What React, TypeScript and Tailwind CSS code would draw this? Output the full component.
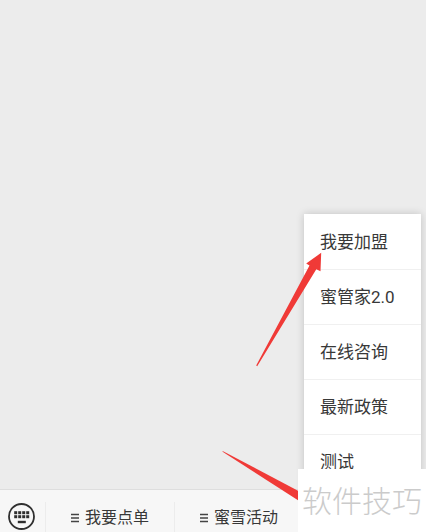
const menuItems = ['我要加盟', '蜜管家2.0', '在线咨询', '最新政策', '测试'];
const tabs = ['我要点单', '蜜雪活动'];

function KeyboardIcon() {
  return (
    <svg viewBox="0 0 27 27" className="size-[27px]" fill="none" aria-hidden="true">
      <circle cx="13.5" cy="13.5" r="12.5" stroke="#2f2f2f" strokeWidth="1.8" />
      <g fill="#2f2f2f">
        {[6.2, 10.2, 14.2, 18.2].map((x) => (
          <g key={x}>
            <rect x={x} y="8.2" width="3" height="3" />
            <rect x={x} y="12.2" width="3" height="3" />
          </g>
        ))}
        <rect x="9.8" y="17.8" width="8" height="2.4" />
      </g>
    </svg>
  );
}

function LinesIcon() {
  return (
    <svg viewBox="0 0 8 10" className="h-[10px] w-2" aria-hidden="true">
      <path d="M0 1.5H8M0 5H8M0 8.5H8" stroke="#444" strokeWidth="1.4" />
    </svg>
  );
}

function PopupMenu() {
  return (
    <ul className="w-[117px] bg-white pt-px shadow-[0_0_8px_rgba(0,0,0,0.18)]">
      {menuItems.map((item) => (
        <li key={item} className="border-b border-[#f0f0f0] last:border-b-0">
          <button type="button" className="flex h-[54px] w-full items-center px-4 text-left">
            {item}
          </button>
        </li>
      ))}
    </ul>
  );
}

function BottomBar() {
  return (
    <nav className="h-[43px] shrink-0 overflow-hidden border-t border-[#dedede] bg-[#f7f7f7] text-base">
      <div className="flex h-14 items-center">
        <button type="button" aria-label="键盘" className="flex w-[45px] shrink-0 self-start pt-[13px] pl-2">
          <KeyboardIcon />
        </button>
        {tabs.map((tab) => (
          <button
            key={tab}
            type="button"
            className="flex h-8 flex-1 items-center justify-center gap-1.5 border-l border-[#ececec]"
          >
            <LinesIcon />
            {tab}
          </button>
        ))}
        <div className="w-[123px] shrink-0" />
      </div>
    </nav>
  );
}

function Arrows() {
  return (
    <svg
      viewBox="0 0 104 250"
      className="pointer-events-none absolute right-[102px] bottom-[31px] h-[250px] w-[104px]"
      fill="#f03a37"
      aria-hidden="true"
    >
      <path d="M36.2 114.6L89.5 14.5L86.2 12.4L101.2 1.8L100.5 20.2L96.3 18.2L37.2 115.3Z" />
      <path d="M2.6 200L78 239.7V249.2L2.6 200.8Z" />
    </svg>
  );
}

export default function App() {
  return (
    <div className="relative flex h-screen flex-col overflow-hidden bg-[#ececec] font-[Roboto,'Noto_Sans_CJK_SC',sans-serif] text-[17px] leading-6 text-[#383838]">
      <main className="flex flex-1 items-end justify-end pr-[5px]">
        <PopupMenu />
      </main>
      <BottomBar />
      <Arrows />
      <div className="absolute right-0 bottom-0 flex h-[63px] w-32 justify-center bg-white pt-3 font-['Noto_Sans_CJK_SC',sans-serif] text-3xl leading-9 font-light text-[#cbcbcb]">
        软件技巧
      </div>
    </div>
  );
}
